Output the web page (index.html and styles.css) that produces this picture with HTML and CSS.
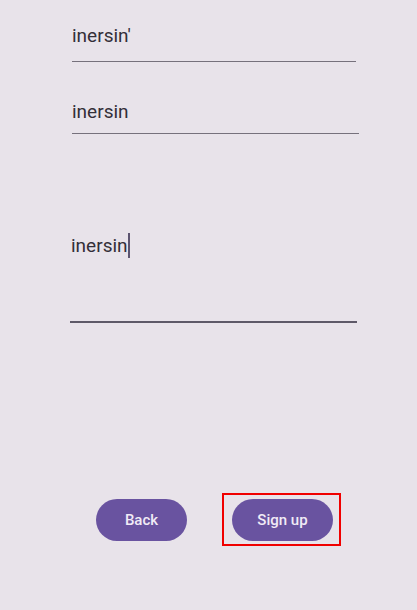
FILE: index.html
```html
<!DOCTYPE html>
<html>
<head>
<meta charset="utf-8">
<link rel="stylesheet" href="styles.css">
</head>
<body>
<div class="screen">
  <div class="field f1"><span class="val">inersin'</span></div>
  <div class="field f2"><span class="val">inersin</span></div>
  <div class="field f3 focused"><span class="val">inersin</span><span class="cursor"></span></div>
  <div class="actions">
    <button class="btn back">Back</button>
    <div class="highlight-wrap">
      <button class="btn signup">Sign up</button>
      <div class="highlight"></div>
    </div>
  </div>
</div>
</body>
</html>
```
FILE: styles.css
```css
html, body {
  margin: 0;
  padding: 0;
}
body {
  background: #E8E3EA;
  font-family: Roboto, "Noto Sans", sans-serif;
  width: 417px;
  height: 610px;
  overflow: hidden;
}
.screen {
  display: flex;
  flex-direction: column;
}
.field {
  font-size: 19px;
  line-height: 22px;
  color: #332F38;
  border-bottom: 1px solid #76717C;
  display: flex;
  align-items: flex-start;
}
.f1 {
  margin: 25px 0 0 72px;
  width: 284px;
  padding-bottom: 14px;
}
.f2 {
  margin: 39px 0 0 72px;
  width: 287px;
  padding-bottom: 10px;
}
.f3 {
  margin: 101px 0 0 70px;
  width: 287px;
  padding-bottom: 63px;
  border-bottom: 2px solid #5E5968;
}
.f3 .val { padding-left: 1px; }
.cursor {
  display: inline-block;
  width: 2px;
  height: 25px;
  margin-top: -2px;
  background: #5C5470;
}
.actions {
  display: flex;
  margin: 176px 0 0 96px;
  gap: 45px;
}
.btn {
  height: 42px;
  border: none;
  border-radius: 21px;
  background: #6953A0;
  color: #F1EBF6;
  font-family: Roboto, "Noto Sans", sans-serif;
  font-size: 15px;
  font-weight: 500;
  padding: 0;
  margin: 0;
}
.back { width: 91px; }
.signup { width: 101px; }
.highlight-wrap {
  position: relative;
  display: flex;
}
.highlight {
  position: absolute;
  top: -6px;
  left: -10px;
  right: -8px;
  bottom: -5px;
  border: 2px solid #F00000;
}
```
